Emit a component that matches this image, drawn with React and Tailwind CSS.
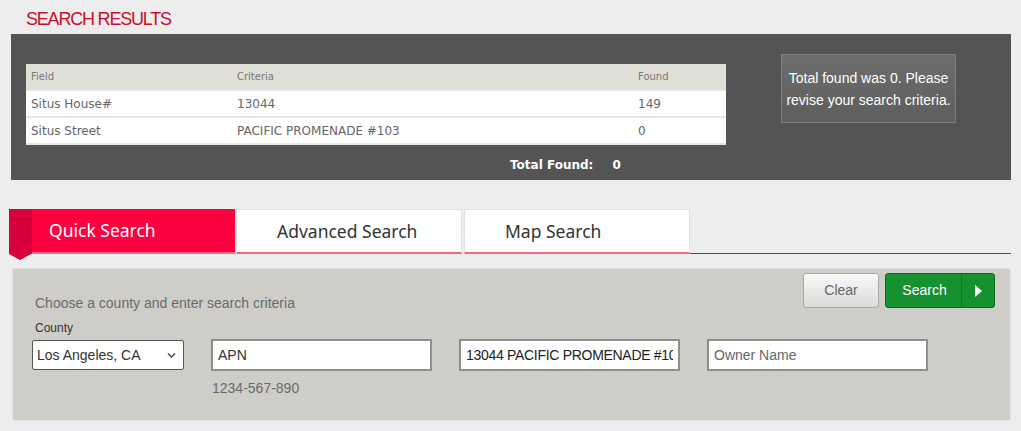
import React from "react";

const verdana = "font-['DejaVu_Sans',Verdana,sans-serif]";

function Row({ a, b, c, header }) {
  const base = header
    ? "h-[27px] bg-[#dfdfd8] text-[10px] text-[#777]"
    : "h-[27px] bg-white text-[12px] text-[#666]";
  return (
    <div className={`flex items-center border-b-2 border-[#e6e6e3] ${base} ${verdana}`}>
      <div className="w-[206px] pl-[5px]">{a}</div>
      <div className="w-[401px] pl-[5px]">{b}</div>
      <div className="w-[93px] pl-[5px]">{c}</div>
    </div>
  );
}

export default function App() {
  return (
    <div className="min-h-[431px] w-[1021px] bg-[#ededed] font-['Liberation_Sans',Arial,sans-serif] overflow-hidden">
      {/* Search results */}
      <div className="pl-[11px]">
        <h1 className="pl-[15px] pt-[9px] pb-[5px] text-[18px] leading-[20px] tracking-[-1.2px] text-[#c8102e]">
          SEARCH RESULTS
        </h1>
        <div className="flex h-[146px] w-[1000px] bg-[#535453]">
          <div className="w-[715px] pl-[15px] pt-[30px]">
            <div className="w-[700px]">
              <Row header a="Field" b="Criteria" c="Found" />
              <Row a="Situs House#" b="13044" c="149" />
              <Row a="Situs Street" b="PACIFIC PROMENADE #103" c="0" />
            </div>
            <div className={`mt-[12px] flex gap-[19px] pl-[484px] text-[12px] leading-[16px] font-bold text-white ${verdana}`}>
              <span>Total Found:</span>
              <span>0</span>
            </div>
          </div>
          <div className="ml-[55px] mt-[20px] flex h-[69px] w-[175px] items-center justify-center border border-[#7e7f7e] bg-gradient-to-b from-[#6c6d6c] to-[#5d5e5d] text-center text-[14px] leading-[22px] text-white">
            Total found was 0. Please
            <br />
            revise your search criteria.
          </div>
        </div>
      </div>

      {/* Tabs */}
      <div className="ml-[9px] mt-[29px] flex w-[1002px] font-['Noto_Sans',sans-serif] text-[17.5px]">
        <div className="relative flex h-[45px] w-[226px] items-center border-b-2 border-[#ee6a82] bg-[#fc003f] pl-[40px] text-white">
          <div className="absolute left-0 top-0 h-[45px] w-[23px] bg-[#d8003a]" />
          <div className="absolute left-0 top-[45px] h-0 w-0 border-l-[11.5px] border-r-[11.5px] border-t-[6px] border-l-transparent border-r-transparent border-t-[#d8003a]" />
          <span className="relative">Quick Search</span>
        </div>
        <div className="ml-px flex h-[45px] w-[226px] items-center border border-b-2 border-[#e2e2dd] border-b-[#ee6a82] bg-white pl-[40px] text-[#333]">
          Advanced Search
        </div>
        <div className="ml-[2px] flex h-[45px] w-[226px] items-center border border-b-2 border-[#e2e2dd] border-b-[#ee6a82] bg-white pl-[40px] text-[#333]">
          Map Search
        </div>
        <div className="flex-1 border-b border-[#d0103a]" />
      </div>

      {/* Search panel */}
      <div className="ml-[12px] mt-[14px] h-[153px] w-[999px] rounded-[2px] border border-[#e3e3df] bg-[#cecdc8] text-[14px]">
        <div className="flex justify-between pr-[15px] pt-[4px]">
          <div className="pl-[22px] pt-[22px] leading-[16px] text-[#6b6b6b]">
            Choose a county and enter search criteria
          </div>
          <div className="flex gap-[6px]">
            <button className="flex h-[35px] w-[76px] items-center justify-center rounded-[3px] border border-[#a9a9a6] bg-gradient-to-b from-[#fafafa] to-[#dadad8] text-[14px] text-[#666]">
              Clear
            </button>
            <button className="flex h-[35px] w-[110px] items-stretch rounded-[3px] border border-[#0c6b22] bg-[#15922f] text-[14px] text-white">
              <span className="flex w-[75px] items-center justify-center pl-[2px]">Search</span>
              <span className="w-px bg-[#0f7b26]" />
              <span className="flex flex-1 items-center justify-center">
                <span className="h-0 w-0 border-b-[6px] border-l-[7px] border-t-[6px] border-b-transparent border-t-transparent border-l-white" />
              </span>
            </button>
          </div>
        </div>
        <div className="mt-[10px] pl-[19px]">
          <div className="pl-[3px] text-[12px] leading-[14px] text-[#333]">County</div>
          <div className="mt-[4px] flex items-start gap-[27px]">
            <div className="relative mt-[1px] h-[30px] w-[152px] rounded-[2px] border border-[#555] bg-white">
              <div className="flex h-full items-center pl-[4px] text-[14px] text-[#333]">Los Angeles, CA</div>
              <svg className="absolute right-[7px] top-[11px]" width="9" height="7" viewBox="0 0 9 7">
                <path d="M1 1.5 L4.5 5 L8 1.5" fill="none" stroke="#444" strokeWidth="1.4" />
              </svg>
            </div>
            <div className="flex flex-col">
              <input
                readOnly
                value="APN"
                className="h-[32px] w-[221px] border-2 border-[#8f8f8f] bg-white px-[5px] text-[14px] text-[#333] outline-none"
              />
              <div className="mt-[9px] pl-[1px] leading-[16px] text-[#6b6b6b]">1234-567-890</div>
            </div>
            <input
              readOnly
              value="13044 PACIFIC PROMENADE #103"
              className="h-[32px] w-[221px] border-2 border-[#8f8f8f] bg-white px-[5px] text-[14px] tracking-[-0.3px] text-[#222] outline-none"
            />
            <input
              readOnly
              placeholder="Owner Name"
              className="h-[32px] w-[221px] border-2 border-[#8f8f8f] bg-white px-[5px] text-[14px] text-[#333] placeholder:text-[#666] outline-none"
            />
          </div>
        </div>
      </div>
    </div>
  );
}
